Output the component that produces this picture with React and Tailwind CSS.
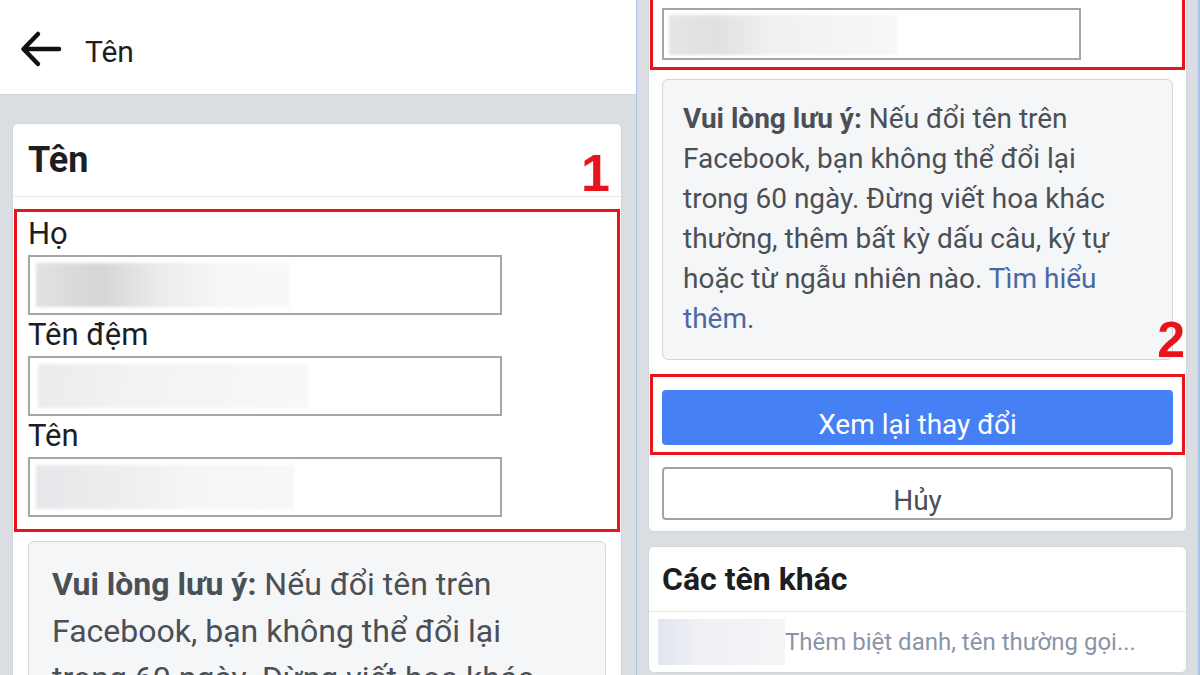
import React from 'react';

function Blur({ className }) {
  return <div className={`blur-[1.5px] ${className}`} />;
}

function Field({ label, blurClass }) {
  return (
    <>
      <div className="h-[34px] leading-[34px] mt-[3px] mb-[4px] text-[31px] text-[#1c1e21] whitespace-nowrap">{label}</div>
      <div className="w-[474px] h-[60px] border-2 border-[#a6a6a6] bg-white p-[6px] overflow-hidden">
        <Blur className={blurClass} />
      </div>
    </>
  );
}

function LeftPanel() {
  return (
    <div className="w-[636px] h-full flex flex-col bg-[#dadde1]">
      <div className="h-[95px] shrink-0 bg-white flex items-center pt-[4px] border-b border-[#d0d3d8]">
        <svg width="44" height="40" viewBox="0 0 44 40" className="ml-[19px]" fill="none" stroke="#111" strokeWidth="4.5" strokeLinecap="round" strokeLinejoin="round">
          <path d="M40 20H5" />
          <path d="M19 5 4.5 20 19 35" />
        </svg>
        <span className="ml-[22px] mt-[6px] text-[30px] text-[#1c1e21] leading-none">Tên</span>
      </div>
      <div className="pl-[12px] pr-[14px] pt-[28px]">
        <div className="relative bg-white rounded-[6px] border border-[#d3d6db]">
          <div className="h-[73px] flex items-center pl-[15px] border-b border-[#e4e6ea]">
            <span className="text-[36px] font-bold text-[#1c1e21] leading-[40px]">Tên</span>
          </div>
          <span className="absolute top-[23px] right-[11px] font-['Liberation_Sans',Arial,sans-serif] font-bold text-[52px] leading-none text-[#e8141b]">1</span>
          <div className="mt-[12px] mx-[1px] border-[3px] border-[#e8141b] pl-[11px] pt-[2px] pb-[12px]">
            <Field label="Họ" blurClass="w-[254px] h-[44px] bg-[linear-gradient(90deg,#e2e2e2_0%,#d5d5d5_25%,#ececec_50%,#f7f7f7_75%,#f8f8f8_100%)]" />
            <Field label="Tên đệm" blurClass="w-[270px] h-[44px] ml-[2px] bg-[linear-gradient(100deg,#ebebeb_0%,#f2f2f2_35%,#f8f8f8_100%)]" />
            <Field label="Tên" blurClass="w-[258px] h-[44px] bg-[linear-gradient(90deg,#e6e7ea_0%,#eeeeef_35%,#f5f5f5_60%,#f7f7f7_100%)]" />
          </div>
          <div className="mt-[9px] mx-[15px] border border-[#d4d6da] rounded-[6px] bg-[#f5f6f7] pl-[23px] pr-[10px] pt-[19px] pb-[20px] text-[32px] leading-[47px] text-[#4b4f56] whitespace-nowrap">
            <b className="font-bold">Vui lòng lưu ý:</b> Nếu đổi tên trên<br />
            Facebook, bạn không thể đổi lại<br />
            trong 60 ngày. Đừng viết hoa khác<br />
            thường, thêm bất kỳ dấu câu, ký tự
          </div>
          <div className="h-[40px]" />
        </div>
      </div>
    </div>
  );
}

function RightPanel() {
  return (
    <div className="w-[561px] h-full px-[11px] bg-[#dadde1]">
      <div className="relative -mt-[30px] bg-white rounded-b-[6px] border border-[#d3d6db] pb-[11px]">
        <div className="mx-[1px] border-[3px] border-[#e8141b] pl-[9px] pt-[34px] pb-[7px]">
          <div className="w-[419px] h-[52px] border-2 border-[#a6a6a6] bg-white p-[5px] overflow-hidden">
            <Blur className="w-[228px] h-[40px] bg-[linear-gradient(90deg,#e4e5e7_0%,#dfe0e2_20%,#f0f0f0_45%,#f7f7f7_100%)]" />
          </div>
        </div>
        <div className="mt-[9px] mx-[13px] border border-[#d4d6da] rounded-[6px] bg-[#f5f6f7] pl-[20px] pr-[8px] pt-[19px] pb-[20px] text-[28px] leading-[40px] text-[#4b4f56] whitespace-nowrap">
          <b className="font-bold">Vui lòng lưu ý:</b> Nếu đổi tên trên<br />
          Facebook, bạn không thể đổi lại<br />
          trong 60 ngày. Đừng viết hoa khác<br />
          thường, thêm bất kỳ dấu câu, ký tự<br />
          hoặc từ ngẫu nhiên nào. <span className="text-[#4b67a6]">Tìm hiểu</span><br />
          <span className="text-[#4b67a6]">thêm</span>.
        </div>
        <span className="absolute top-[344px] right-[1px] font-['Liberation_Sans',Arial,sans-serif] font-bold text-[50px] leading-none text-[#e8141b]">2</span>
        <div className="mt-[14px] mx-[1px] border-[3px] border-[#e8141b] px-[9px] pt-[13px] pb-[7px]">
          <div className="h-[55px] rounded-[4px] bg-[#4680f5] flex items-center justify-center pt-[14px] text-white text-[28px]">Xem lại thay đổi</div>
        </div>
        <div className="mt-[12px] mx-[13px] h-[53px] rounded-[4px] border-2 border-[#a3a3a3] bg-white flex items-center justify-center pt-[14px] text-[#4b4f56] text-[28px]">Hủy</div>
      </div>
      <div className="mt-[14px] bg-white rounded-[6px] border border-[#d3d6db] h-[127px]">
        <div className="h-[65px] flex items-center pl-[13px] border-b border-[#e4e6ea]">
          <span className="text-[32px] font-bold text-[#1c1e21]">Các tên khác</span>
        </div>
        <div className="flex items-center pl-[9px] pt-[7px]">
          <div className="w-[127px] h-[46px] bg-[linear-gradient(90deg,#e1e5ee_0%,#eef0f4_30%,#f4f5f7_100%)]" />
          <span className="text-[24px] text-[#8a94a8] whitespace-nowrap">Thêm biệt danh, tên thường gọi...</span>
        </div>
      </div>
    </div>
  );
}

export default function App() {
  return (
    <div className="w-[1200px] h-[675px] overflow-hidden flex bg-[#dadde1] font-['Roboto',sans-serif]">
      <LeftPanel />
      <div className="w-px h-full bg-[#a9c5ea]" />
      <RightPanel />
      <div className="w-[2px] h-full bg-[#a9c5ea]" />
    </div>
  );
}
